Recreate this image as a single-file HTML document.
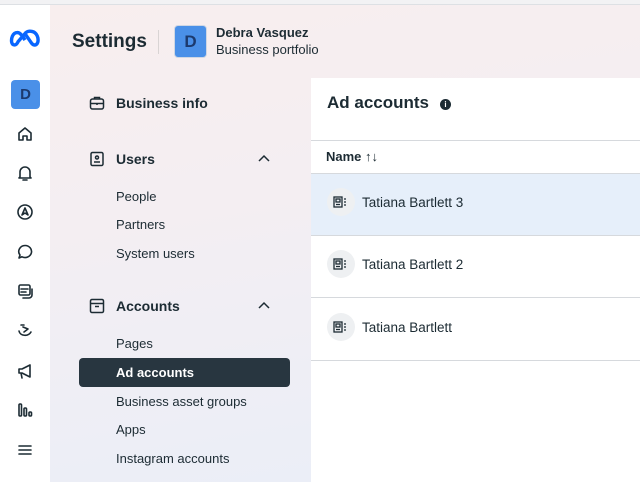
<!DOCTYPE html>
<html><head><style>
*{margin:0;padding:0;box-sizing:border-box}
body{width:640px;height:482px;overflow:hidden;font-family:"Liberation Sans",sans-serif;color:#1c2b33;position:relative;background:linear-gradient(170deg,#f8eeee 0%,#f4eef2 40%,#e9eef8 100%)}
.top{position:absolute;left:0;top:0;width:640px;height:5px;background:#f2f2f4;border-bottom:1px solid #dde0e4}
.rail{position:absolute;left:0;top:5px;width:50px;height:477px;background:#fff}
.ic{position:absolute;left:15px;width:20px;height:20px}
.ic svg{width:20px;height:20px;fill:none;stroke:#1c2b33;stroke-width:1.6;stroke-linecap:round;stroke-linejoin:round}
.t{position:absolute;white-space:nowrap}
.panel{position:absolute;left:311px;top:78px;width:329px;height:404px;background:#fff}
.row{position:absolute;left:0;width:329px;border-bottom:1px solid #d6d9dd}
.ri{position:absolute;left:16px;width:28px;height:28px;border-radius:50%;background:#eef0f2}
.nav{font-size:14px;color:#1c2b33}
</style></head><body>
<div class="top"></div>
<div class="rail">
 <svg style="position:absolute;left:9px;top:24px" width="32" height="20" viewBox="0 0 30 18"><path d="M8 3C3 3 2 9 2.5 12c.6 3 4 4 6-.5L15 4c2-3 5-2.5 7-2 4 1 6 6 5 10-1 3-4 4-6.5 0L15 4" fill="none" stroke="#0866ff" stroke-width="3.2" stroke-linecap="round"/><path d="M8 3c2.5 0 4.5 3 7 7" fill="none" stroke="#0866ff" stroke-width="3.2"/></svg>
 <div style="position:absolute;left:11px;top:75px;width:29px;height:29px;border-radius:4px;background:#4a90e8;color:#1c3a6e;font-weight:bold;font-size:15px;text-align:center;line-height:29px">D</div>
 <div class="ic" style="top:119px"><svg viewBox="0 0 20 20"><path d="M4 9l6-5 6 5v7h-4v-4h-4v4H4z"/></svg></div>
 <div class="ic" style="top:158px"><svg viewBox="0 0 20 20"><path d="M5 14V9a5 5 0 0110 0v5l1 1H4zM8 17h4"/></svg></div>
 <div class="ic" style="top:197px"><svg viewBox="0 0 20 20"><circle cx="10" cy="10" r="7"/><path d="M7 13l3-7 3 7-3-2z"/></svg></div>
 <div class="ic" style="top:237px"><svg viewBox="0 0 20 20"><path d="M10 3.5a6.5 6 0 11-3 11.3L4 16l1-3A6.5 6 0 0110 3.5z"/></svg></div>
 <div class="ic" style="top:276px"><svg viewBox="0 0 20 20"><rect x="4" y="4" width="11" height="10" rx="1.5"/><path d="M6 8h7M6 11h5M17 8v6a3 3 0 01-3 3h-6"/></svg></div>
 <div class="ic" style="top:316px"><svg viewBox="0 0 20 20"><path d="M4 10c1 5 9 6 12 1M8 6l5 2-4 3M6 4h3"/></svg></div>
 <div class="ic" style="top:356px"><svg viewBox="0 0 20 20"><path d="M4 8h3l8-4v12l-8-4H4zM6 12l1 5"/></svg></div>
 <div class="ic" style="top:395px"><svg viewBox="0 0 20 20"><rect x="4" y="4" width="2.5" height="12" rx="1"/><rect x="9" y="8" width="2.5" height="8" rx="1"/><rect x="14" y="12" width="2.5" height="4" rx="1"/></svg></div>
 <div class="ic" style="top:435px"><svg viewBox="0 0 20 20"><path d="M4 6h12M4 10h12M4 14h12"/></svg></div>
</div>
<div class="t" style="left:72px;top:31px;font-size:19px;font-weight:bold">Settings</div>
<div style="position:absolute;left:158px;top:30px;width:1px;height:24px;background:#d9d4d4"></div>
<div style="position:absolute;left:174px;top:25px;width:33px;height:33px;border-radius:4px;background:#4a90e8;border:1px solid #cfd7e4;color:#1c3a6e;font-weight:bold;font-size:17px;text-align:center;line-height:31px">D</div>
<div class="t" style="left:216px;top:25px;font-size:13px;font-weight:bold">Debra Vasquez</div>
<div class="t" style="left:216px;top:42px;font-size:13px">Business portfolio</div>

<svg style="position:absolute;left:89px;top:95px" width="16" height="16" viewBox="0 0 16 16" fill="none" stroke="#1c2b33" stroke-width="1.5"><rect x="1.5" y="4" width="13" height="10" rx="2"/><path d="M5.5 4V2.5h5V4M1.5 8.5h13M8 8v2"/></svg>
<div class="t nav" style="left:116px;top:95px;font-weight:bold">Business info</div>
<svg style="position:absolute;left:89px;top:151px" width="16" height="16" viewBox="0 0 16 16" fill="none" stroke="#1c2b33" stroke-width="1.5"><rect x="2" y="1.5" width="12" height="13" rx="1.5"/><circle cx="8" cy="6.5" r="1.5"/><path d="M5 11h6"/></svg>
<div class="t nav" style="left:116px;top:151px;font-weight:bold">Users</div>
<svg style="position:absolute;left:258px;top:154px" width="12" height="8" viewBox="0 0 12 8" fill="none" stroke="#1c2b33" stroke-width="1.5"><path d="M1 7l5-5 5 5"/></svg>
<div class="t nav" style="left:116px;top:189px;font-size:13px">People</div>
<div class="t nav" style="left:116px;top:217px;font-size:13px">Partners</div>
<div class="t nav" style="left:116px;top:246px;font-size:13px">System users</div>
<svg style="position:absolute;left:89px;top:298px" width="16" height="16" viewBox="0 0 16 16" fill="none" stroke="#1c2b33" stroke-width="1.5"><rect x="1.5" y="1.5" width="13" height="13" rx="1.5"/><path d="M1.5 5.5h13M6 8.5h4"/></svg>
<div class="t nav" style="left:116px;top:298px;font-weight:bold">Accounts</div>
<svg style="position:absolute;left:258px;top:301px" width="12" height="8" viewBox="0 0 12 8" fill="none" stroke="#1c2b33" stroke-width="1.5"><path d="M1 7l5-5 5 5"/></svg>
<div class="t nav" style="left:116px;top:336px;font-size:13px">Pages</div>
<div style="position:absolute;left:79px;top:358px;width:211px;height:29px;border-radius:4px;background:#283640"></div>
<div class="t" style="left:116px;top:365px;font-size:13px;font-weight:bold;color:#fff">Ad accounts</div>
<div class="t nav" style="left:116px;top:394px;font-size:13px">Business asset groups</div>
<div class="t nav" style="left:116px;top:422px;font-size:13px">Apps</div>
<div class="t nav" style="left:116px;top:451px;font-size:13px">Instagram accounts</div>

<div class="panel">
 <div class="t" style="left:16px;top:15px;font-size:17px;font-weight:bold">Ad accounts</div>
 <div style="position:absolute;left:129px;top:21px;width:11px;height:11px;border-radius:50%;background:#1c2b33;color:#fff;font-size:8px;font-weight:bold;text-align:center;line-height:11px">i</div>
 <div class="row" style="top:0;height:63px"></div>
 <div class="row" style="top:63px;height:33px;border-bottom:none"></div>
 <div class="t" style="left:15px;top:71px;font-size:13px;font-weight:bold">Name ↑↓</div>
 <div class="row" style="top:95px;height:63px;background:#e6effa;border-top:1px solid #d6d9dd"></div>
 <div class="row" style="top:158px;height:62px"></div>
 <div class="row" style="top:220px;height:63px"></div>
 <div class="ri" style="top:110px"></div><div class="ri" style="top:172px"></div><div class="ri" style="top:235px"></div>
 <div class="t" style="left:51px;top:117px;font-size:13.5px">Tatiana Bartlett 3</div>
 <div class="t" style="left:51px;top:179px;font-size:13.5px">Tatiana Bartlett 2</div>
 <div class="t" style="left:51px;top:242px;font-size:13.5px">Tatiana Bartlett</div>
</div>
<svg style="position:absolute;left:333px;top:196px" width="14" height="12" viewBox="0 0 14 12" fill="none" stroke="#1c2b33" stroke-width="1.3"><rect x="1" y="1" width="8" height="10"/><rect x="3" y="3" width="4" height="3"/><path d="M3 8.5h4M11 3h2M11 6h2M11 9h2"/></svg>
<svg style="position:absolute;left:333px;top:258px" width="14" height="12" viewBox="0 0 14 12" fill="none" stroke="#1c2b33" stroke-width="1.3"><rect x="1" y="1" width="8" height="10"/><rect x="3" y="3" width="4" height="3"/><path d="M3 8.5h4M11 3h2M11 6h2M11 9h2"/></svg>
<svg style="position:absolute;left:333px;top:321px" width="14" height="12" viewBox="0 0 14 12" fill="none" stroke="#1c2b33" stroke-width="1.3"><rect x="1" y="1" width="8" height="10"/><rect x="3" y="3" width="4" height="3"/><path d="M3 8.5h4M11 3h2M11 6h2M11 9h2"/></svg>
</body></html>
